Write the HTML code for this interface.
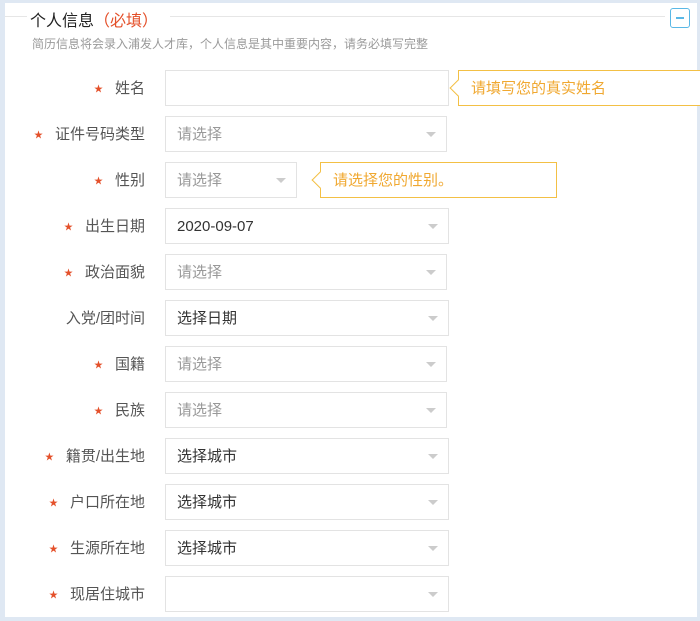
<!DOCTYPE html>
<html><head><meta charset="utf-8"><style>
body{margin:0;width:700px;height:621px;background:#dfe8f3;font-family:"Liberation Sans","Noto Sans CJK SC",sans-serif;overflow:hidden;position:relative}
.panel{position:absolute;left:5px;top:3px;width:692px;height:614px;background:#fff}
.a{position:absolute}
.line{position:absolute;top:16px;height:1px;background:#e6e6e6}
.title{left:30px;top:7px;font-size:16px;color:#222}
.title span{color:#e4502a}
.sub{left:32px;top:35px;font-size:12px;color:#9a9a9a}
.lab{position:absolute;right:555px;font-size:15px;color:#555;height:36px;line-height:37px;white-space:nowrap}
.lab i{font-style:normal;color:#e4502a;font-size:9px;margin-right:12px;position:relative;top:-1px}
.box{position:absolute;left:165px;width:282px;height:36px;border:1px solid #e3e3e3;background:#fff;box-sizing:border-box;font-size:15px;line-height:36px;padding-left:11px;color:#333}
.box.ph{color:#999}
.box:after{content:"";position:absolute;right:10px;top:15px;border-left:5px solid transparent;border-right:5px solid transparent;border-top:5px solid #ccc}
.tip{position:absolute;height:36px;border:1px solid #f3c045;box-sizing:border-box;color:#f0a830;font-size:15px;line-height:36px;padding-left:12px;background:#fff}
.tip:before{content:"";position:absolute;left:-7px;top:11px;width:11px;height:11px;border-left:1px solid #f3c045;border-bottom:1px solid #f3c045;background:#fff;transform:rotate(45deg)}
.nx:after{display:none}
</style></head><body>
<div class="panel"></div>
<div class="line" style="left:5px;width:22px"></div>
<div class="line" style="left:170px;width:495px"></div>
<div class="a title">个人信息<span>（必填）</span></div>
<div class="a" style="left:670px;top:8px;width:18px;height:18px;border:1.5px solid #5ab8e6;border-radius:3px"><div style="position:absolute;left:5px;top:8px;width:8px;height:1.5px;background:#5ab8e6"></div></div>
<div class="a sub">简历信息将会录入浦发人才库，个人信息是其中重要内容，请务必填写完整</div>

<div class="lab" style="top:70px"><i>★</i>姓名</div><div class="box nx" style="top:70px;width:284px"></div>
<div class="tip" style="left:458px;top:70px;width:250px">请填写您的真实姓名</div>

<div class="lab" style="top:116px"><i>★</i>证件号码类型</div><div class="box ph" style="top:116px">请选择</div>
<div class="lab" style="top:162px"><i>★</i>性别</div><div class="box ph" style="top:162px;width:132px">请选择</div>
<div class="tip" style="left:320px;top:162px;width:237px">请选择您的性别。</div>
<div class="lab" style="top:208px"><i>★</i>出生日期</div><div class="box" style="top:208px;width:284px">2020-09-07</div>
<div class="lab" style="top:254px"><i>★</i>政治面貌</div><div class="box ph" style="top:254px">请选择</div>
<div class="lab" style="top:300px">入党/团时间</div><div class="box" style="top:300px;width:284px">选择日期</div>
<div class="lab" style="top:346px"><i>★</i>国籍</div><div class="box ph" style="top:346px">请选择</div>
<div class="lab" style="top:392px"><i>★</i>民族</div><div class="box ph" style="top:392px">请选择</div>
<div class="lab" style="top:438px"><i>★</i>籍贯/出生地</div><div class="box" style="top:438px;width:284px">选择城市</div>
<div class="lab" style="top:484px"><i>★</i>户口所在地</div><div class="box" style="top:484px;width:284px">选择城市</div>
<div class="lab" style="top:530px"><i>★</i>生源所在地</div><div class="box" style="top:530px;width:284px">选择城市</div>
<div class="lab" style="top:576px"><i>★</i>现居住城市</div><div class="box" style="top:576px;width:284px"></div>
</body></html>
